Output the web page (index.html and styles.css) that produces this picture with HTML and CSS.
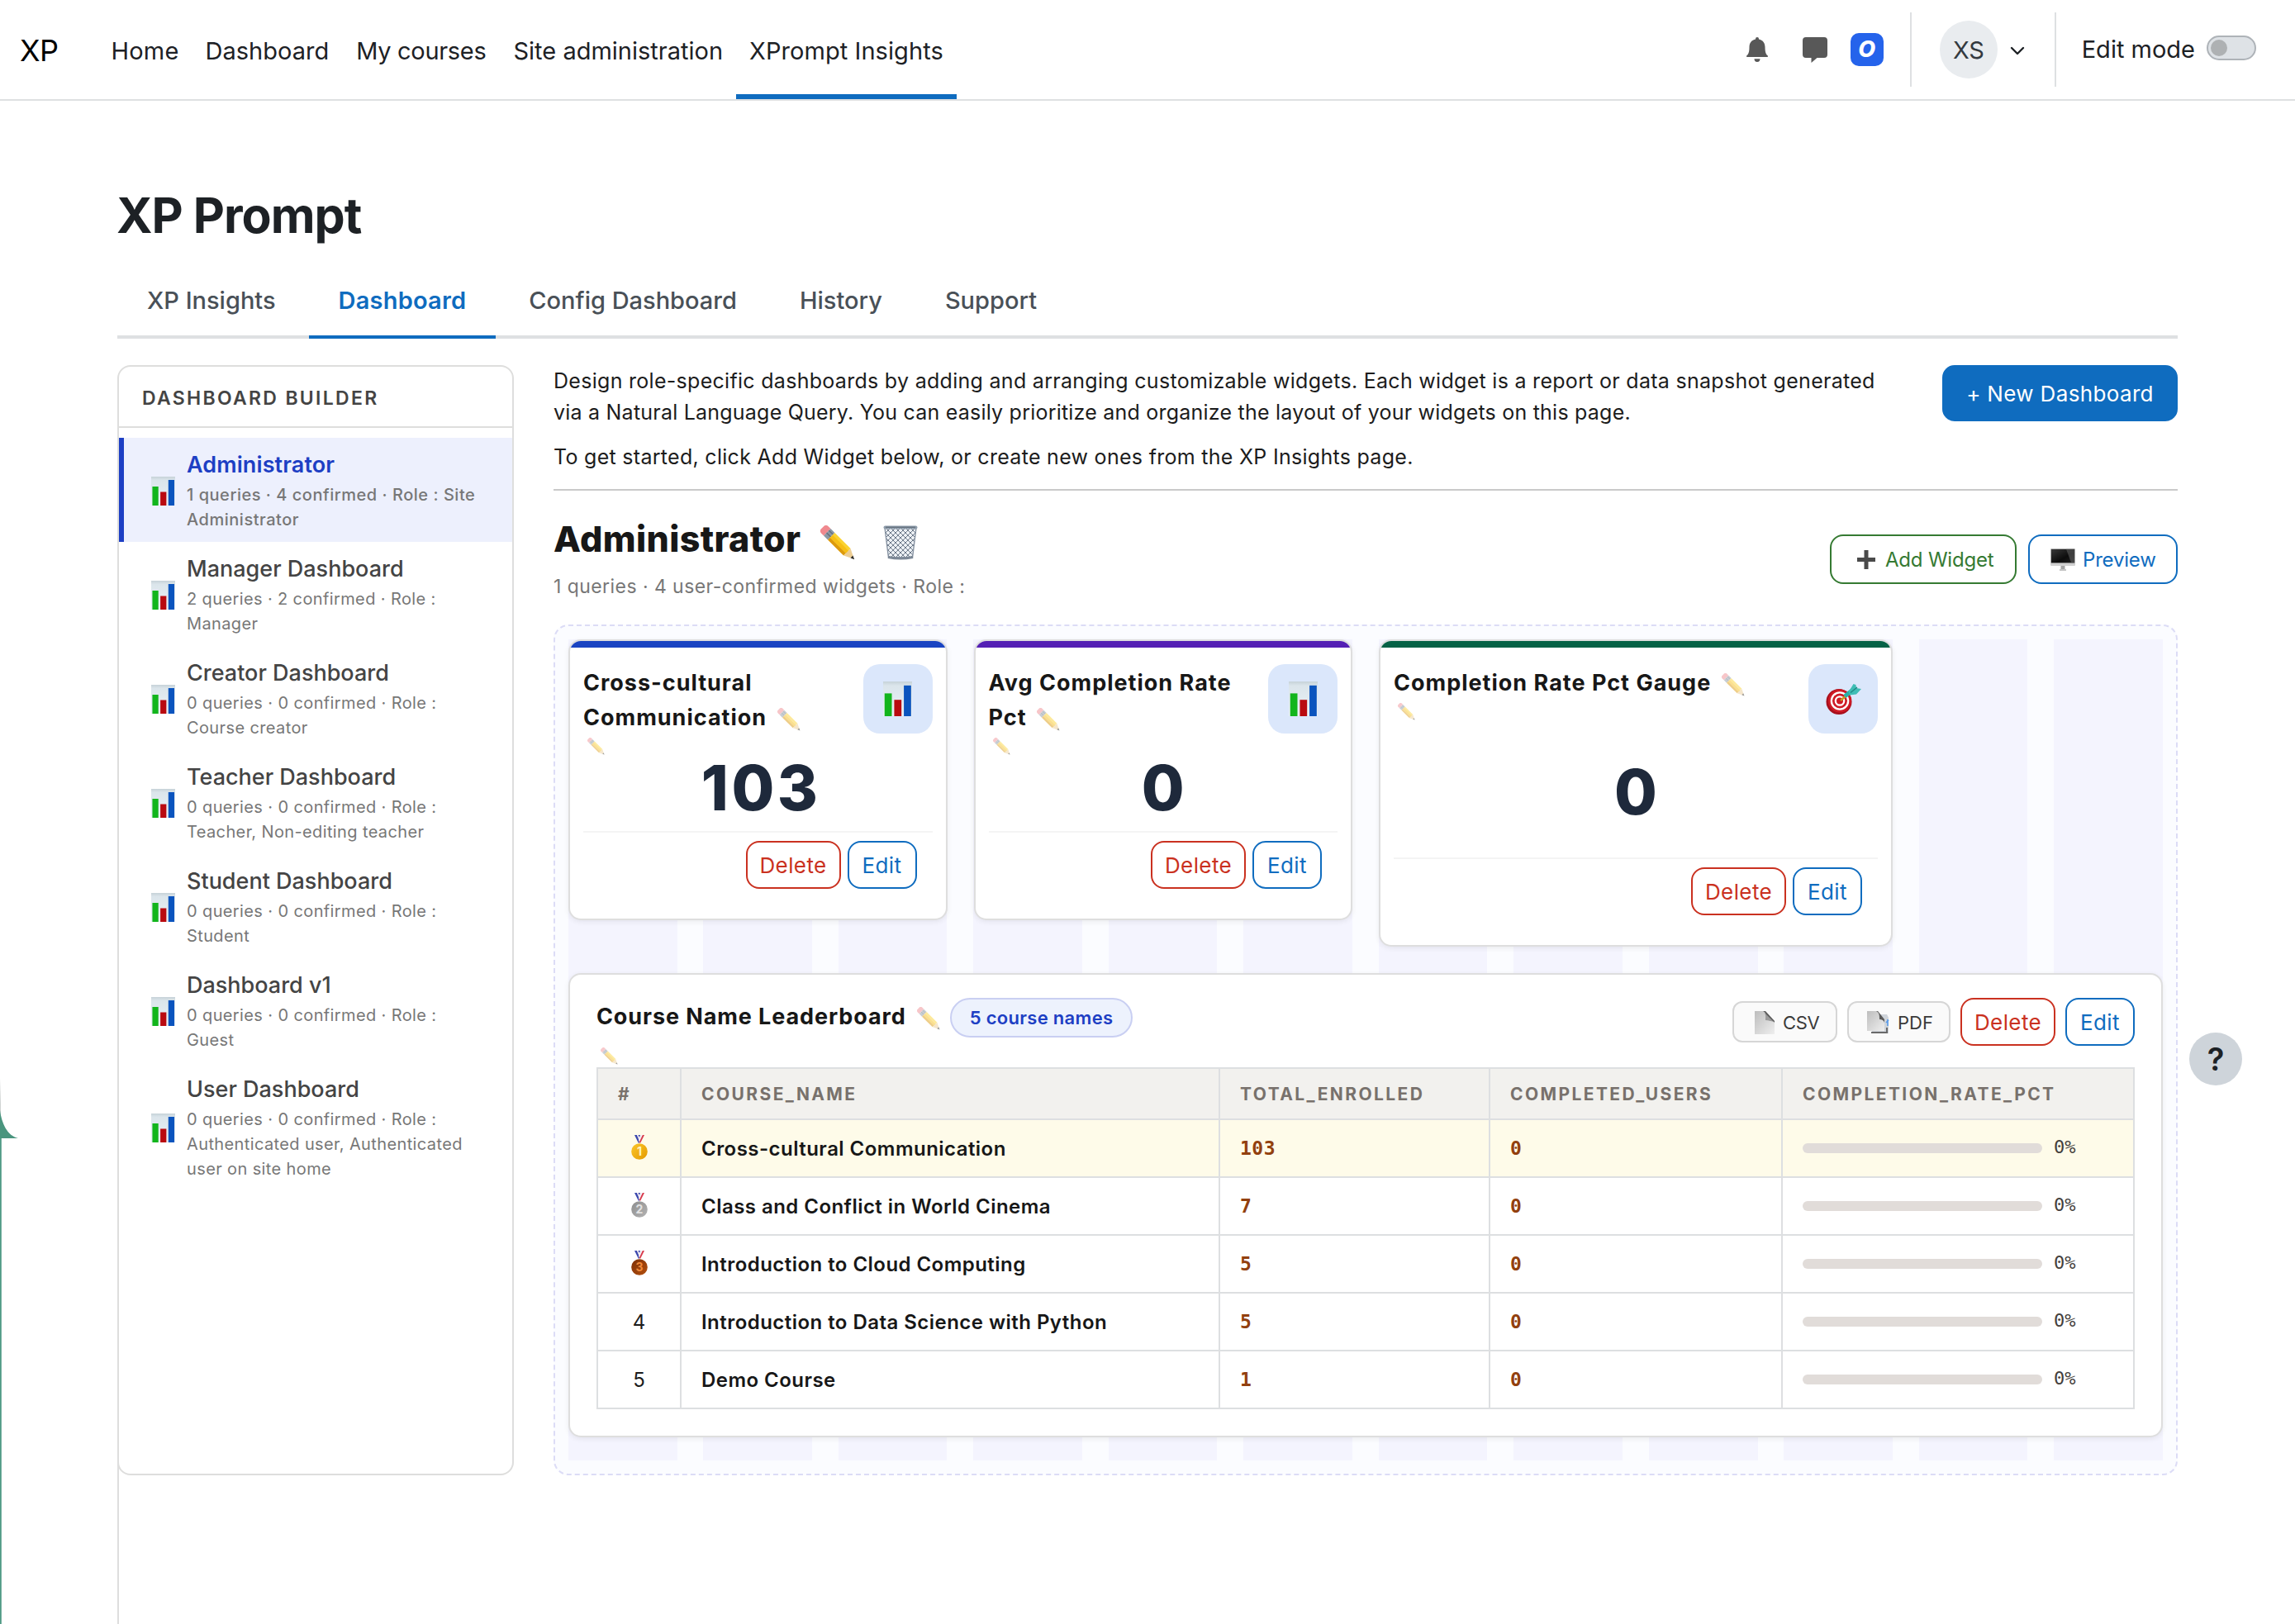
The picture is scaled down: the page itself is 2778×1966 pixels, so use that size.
FILE: index.html
```html
<!DOCTYPE html>
<html lang="en">
<head>
<meta charset="utf-8">
<title>XP Prompt</title>
<link rel="stylesheet" href="styles.css">
</head>
<body>
<svg class="defs" width="0" height="0" aria-hidden="true">
  <defs>
    <linearGradient id="paper" x1="0" y1="0" x2="0" y2="1"><stop offset="0" stop-color="#c6d2d8"/><stop offset=".12" stop-color="#dbe5eb"/><stop offset="1" stop-color="#eaf1f6"/></linearGradient>
    <linearGradient id="gold" x1="0" y1="0" x2="1" y2="1"><stop offset="0" stop-color="#fcc62a"/><stop offset="1" stop-color="#e39a00"/></linearGradient>
    <linearGradient id="silver" x1="0" y1="0" x2="1" y2="1"><stop offset="0" stop-color="#8d8d8d"/><stop offset="1" stop-color="#b4b4b4"/></linearGradient>
    <linearGradient id="bronze" x1="0" y1="0" x2="1" y2="1"><stop offset="0" stop-color="#7d2f06"/><stop offset="1" stop-color="#b4510f"/></linearGradient>
    <linearGradient id="screen" x1="0" y1="0" x2="1" y2="1"><stop offset="0" stop-color="#3a3a3a"/><stop offset=".6" stop-color="#0c0c0c"/><stop offset="1" stop-color="#222"/></linearGradient>
    <linearGradient id="sheet" x1="0" y1="0" x2="1" y2="1"><stop offset="0" stop-color="#bdbdbd"/><stop offset="1" stop-color="#efefef"/></linearGradient>
    <pattern id="mesh" width="6" height="6" patternUnits="userSpaceOnUse"><path d="M0 0L6 6M6 0L0 6" stroke="#6f7b8b" stroke-width="1" fill="none"/></pattern>
    <symbol id="chart" viewBox="0 0 30 35" preserveAspectRatio="none">
      <rect width="30" height="35" fill="url(#paper)"/>
      <rect x="1.5" y="12" width="7.5" height="23" fill="#12b51c"/>
      <rect x="11.5" y="18.5" width="7.5" height="16.5" fill="#b90a10"/>
      <rect x="21.5" y="4" width="7.5" height="31" fill="#0b54be"/>
    </symbol>
    <symbol id="pencil" viewBox="0 0 42 42">
      <g transform="translate(21 21) rotate(45)">
        <path d="M-18 -6h-4a4 4 0 0 0-4 4v4a4 4 0 0 0 4 4h4z" fill="#f0898f"/>
        <path d="M-18 -6h7v12h-7z" fill="#8b98a5"/>
        <path d="M-18 -3h7M-18 1h7" stroke="#65717e" stroke-width="1.4"/>
        <path d="M-11 -6h27v4h-27z" fill="#fbd331"/>
        <path d="M-11 -2.4h28v4.8h-28z" fill="#f7bf14"/>
        <path d="M-11 2.2h27v3.8h-27z" fill="#dd9a0b"/>
        <path d="M16 -6L28 0L16 6z" fill="#eccd94"/>
        <path d="M24 -2L28.500 0L24 2z" fill="#2b2b2b"/>
      </g>
    </symbol>
    <symbol id="trash" viewBox="0 0 42 42">
      <path d="M2 3h38l-4.500 36h-29z" fill="#edf1f5"/>
      <path d="M2 3h38l-4.500 36h-29z" fill="url(#mesh)" stroke="#8793a2" stroke-width="1.400"/>
      <path d="M6 38.500q15 3 30 0" stroke="#7c8896" stroke-width="3" fill="none"/>
      <rect x=".5" y=".5" width="41" height="4" rx="2" fill="#8f9dac"/>
      <path d="M3 2.200h36" stroke="#55606d" stroke-width="1"/>
    </symbol>
    <symbol id="target" viewBox="0 0 43 38">
      <ellipse cx="16" cy="22.500" rx="15.500" ry="15.500" fill="#a80f1c"/>
      <ellipse cx="17" cy="21.500" rx="14" ry="14" fill="#cf1a25"/>
      <ellipse cx="17" cy="21.500" rx="11.300" ry="11.300" fill="#fff"/>
      <ellipse cx="17" cy="21.500" rx="9" ry="9" fill="#cf1a25"/>
      <ellipse cx="17" cy="21.500" rx="6.300" ry="6.300" fill="#fff"/>
      <ellipse cx="17" cy="21.500" rx="4" ry="4" fill="#cf1a25"/>
      <path d="M18 21L26 14" stroke="#c79a1e" stroke-width="2.500"/>
      <path d="M23 16L36 5.500" stroke="#2bb0a9" stroke-width="5"/>
      <path d="M28 10L33.500 1l3 1 .5 4 6 1-6 6.500-8 1z" fill="#3fbdb5"/>
      <path d="M30 11.500L38 5" stroke="#1f8580" stroke-width="1.300"/>
    </symbol>
    <symbol id="plus" viewBox="0 0 22 23"><path d="M8.500 0h5v9H22v5h-8.500v9h-5v-9H0V9h8.500z" fill="#4a4a4a"/></symbol>
    <symbol id="monitor" viewBox="0 0 30 27">
      <rect width="30" height="21" rx="1" fill="#d0d0d0"/>
      <rect x=".8" y=".8" width="28.400" height="16.600" fill="url(#screen)"/>
      <path d="M19 .8h10.200v16.600h-4z" fill="#666" opacity=".55"/>
      <path d="M12.500 21h5v4.500h-5z" fill="#a5a5a5"/><path d="M11 25h8v2h-8z" fill="#c4c4c4"/>
    </symbol>
    <symbol id="page" viewBox="0 0 24 28">
      <path d="M0 0h11l13 13v15H0z" fill="url(#sheet)"/>
      <path d="M10 0c4 2 4 6 4 11 4 0 8 0 10 3v-2L13 0z" fill="#5a5a5a"/>
      <path d="M11 1c3 3 2 7 2 10 4 0 6 1 10 2z" fill="#9a9a9a"/>
    </symbol>
    <symbol id="pages" viewBox="0 0 27 28">
      <path d="M6 4h18l2 4v19H6z" fill="#cfd4da"/>
      <path d="M25 10v8M23 14l3-3" stroke="#5a9bea" stroke-width="1.600"/>
      <path d="M5 26h19v-6" stroke="#6a6a6a" stroke-width="2" fill="none"/>
      <path d="M0 0h12l9 11v13H0z" fill="url(#sheet)"/>
      <path d="M11 0c4 2 4 5 4 10 3 0 5 1 6 4v-4L13 0z" fill="#5a5a5a"/>
    </symbol>
    <symbol id="ribbon" viewBox="0 0 12 10">
      <path d="M0 0h3l4 8-2 2z" fill="#3b48ad"/><path d="M3 0h1.600L7.500 8 6.500 9z" fill="#f2e9f0"/>
      <path d="M4.500 0H7l-1 3z" fill="#3b48ad"/>
      <path d="M12 0H9.500L5.500 8l1.500 2z" fill="#d8394a"/><path d="M9.800 0H8L5 7l.8 1.500z" fill="#f2e9f0"/>
    </symbol>
  </defs>
</svg>

<header class="topbar">
  <a class="brand">XP</a>
  <nav class="nav">
    <a class="nav-item home">Home</a>
    <a class="nav-item">Dashboard</a>
    <a class="nav-item tight">My courses</a>
    <a class="nav-item">Site administration</a>
    <a class="nav-item current">XPrompt Insights</a>
  </nav>
  <div class="tools">
    <svg class="bell" width="26" height="30" viewBox="0 0 26 30" fill="#585858"><path d="M13 0a2 2 0 0 1 2 2v.6c4.700.9 7.500 4.600 7.500 9.400 0 6 1 8.600 3.300 10.500.6.600.2 1.500-.6 1.500H.8c-.8 0-1.200-.9-.6-1.500C2.500 20.600 3.500 18 3.500 12c0-4.800 2.800-8.500 7.500-9.400V2a2 2 0 0 1 2-2z"/><path d="M9.500 26.200h7a3.500 3.700 0 0 1-7 0z"/></svg>
    <svg class="chat" width="30" height="31" viewBox="0 0 30 31" fill="#585858"><path d="M4 0h22a4 4 0 0 1 4 4v17a4 4 0 0 1-4 4h-8.500l-7 6v-6H4a4 4 0 0 1-4-4V4a4 4 0 0 1 4-4z"/></svg>
    <span class="o-badge">O</span>
    <span class="rule"></span>
    <span class="avatar">XS</span>
    <svg class="chevron" width="18" height="11" viewBox="0 0 18 11"><path d="M2 2l7 7 7-7" fill="none" stroke="#1d2125" stroke-width="2.400" stroke-linecap="round" stroke-linejoin="round"/></svg>
    <span class="rule second"></span>
    <span class="edit-label">Edit mode</span>
    <span class="toggle"><span class="knob"></span></span>
  </div>
</header>

<main class="page">
  <h1>XP Prompt</h1>
  <div class="tabs">
    <a class="tab">XP Insights</a>
    <a class="tab active">Dashboard</a>
    <a class="tab">Config Dashboard</a>
    <a class="tab">History</a>
    <a class="tab">Support</a>
  </div>

  <div class="columns">
    <aside class="sidebar">
      <div class="sidebar-head">DASHBOARD BUILDER</div>
      <div class="list">
        <div class="item selected"><svg class="item-icon"><use href="#chart"/></svg><div><div class="item-title">Administrator</div><div class="item-sub">1 queries · 4 confirmed · Role : Site<br>Administrator</div></div></div>
        <div class="item"><svg class="item-icon"><use href="#chart"/></svg><div><div class="item-title">Manager Dashboard</div><div class="item-sub">2 queries · 2 confirmed · Role :<br>Manager</div></div></div>
        <div class="item"><svg class="item-icon"><use href="#chart"/></svg><div><div class="item-title">Creator Dashboard</div><div class="item-sub">0 queries · 0 confirmed · Role :<br>Course creator</div></div></div>
        <div class="item"><svg class="item-icon"><use href="#chart"/></svg><div><div class="item-title">Teacher Dashboard</div><div class="item-sub">0 queries · 0 confirmed · Role :<br>Teacher, Non-editing teacher</div></div></div>
        <div class="item"><svg class="item-icon"><use href="#chart"/></svg><div><div class="item-title">Student Dashboard</div><div class="item-sub">0 queries · 0 confirmed · Role :<br>Student</div></div></div>
        <div class="item"><svg class="item-icon"><use href="#chart"/></svg><div><div class="item-title">Dashboard v1</div><div class="item-sub">0 queries · 0 confirmed · Role :<br>Guest</div></div></div>
        <div class="item"><svg class="item-icon"><use href="#chart"/></svg><div><div class="item-title">User Dashboard</div><div class="item-sub">0 queries · 0 confirmed · Role :<br>Authenticated user, Authenticated<br>user on site home</div></div></div>
      </div>
    </aside>

    <section class="main">
      <div class="intro">
        <div class="intro-text">
          <p>Design role-specific dashboards by adding and arranging customizable widgets. Each widget is a report or data snapshot generated<br><span class="closer">via a Natural Language Query. You can easily prioritize and organize the layout of your widgets on this page.</span></p>
          <p>To get started, click Add Widget below, or create new ones from the XP Insights page.</p>
        </div>
        <button class="btn-new">+ New Dashboard</button>
      </div>

      <div class="board-head">
        <div>
          <div class="board-title"><h2>Administrator</h2><svg class="icon-edit"><use href="#pencil"/></svg><svg class="icon-trash"><use href="#trash"/></svg></div>
          <div class="board-sub">1 queries · 4 user-confirmed widgets · Role :</div>
        </div>
        <div class="board-actions">
          <button class="btn-add"><svg width="22" height="23"><use href="#plus"/></svg>Add Widget</button>
          <button class="btn-preview"><svg width="30" height="27"><use href="#monitor"/></svg>Preview</button>
        </div>
      </div>

      <div class="board">
        <article class="card blue">
          <div class="card-head">
            <div>
              <h3>Cross-cultural<br>Communication <svg class="p-md"><use href="#pencil"/></svg></h3>
              <svg class="p-sm"><use href="#pencil"/></svg>
            </div>
            <span class="tile"><svg width="35" height="42"><use href="#chart"/></svg></span>
          </div>
          <div class="value wide">103</div>
          <div class="card-foot"><button class="btn-del">Delete</button><button class="btn-edit">Edit</button></div>
        </article>
        <article class="card purple">
          <div class="card-head">
            <div>
              <h3>Avg Completion Rate<br>Pct <svg class="p-md"><use href="#pencil"/></svg></h3>
              <svg class="p-sm"><use href="#pencil"/></svg>
            </div>
            <span class="tile"><svg width="35" height="42"><use href="#chart"/></svg></span>
          </div>
          <div class="value">0</div>
          <div class="card-foot"><button class="btn-del">Delete</button><button class="btn-edit">Edit</button></div>
        </article>
        <article class="card green">
          <div class="card-head">
            <div>
              <h3>Completion Rate Pct Gauge <svg class="p-md"><use href="#pencil"/></svg></h3>
              <svg class="p-sm"><use href="#pencil"/></svg>
            </div>
            <span class="tile"><svg width="43" height="38"><use href="#target"/></svg></span>
          </div>
          <div class="value">0</div>
          <div class="card-foot"><button class="btn-del">Delete</button><button class="btn-edit">Edit</button></div>
        </article>

        <article class="leader">
          <div class="leader-head">
            <div class="leader-title"><h3>Course Name Leaderboard</h3><svg class="p-md"><use href="#pencil"/></svg><span class="count">5 course names</span></div>
            <div class="leader-actions">
              <button class="btn-file"><svg width="24" height="28"><use href="#page"/></svg>CSV</button>
              <button class="btn-file pdf"><svg width="27" height="28"><use href="#pages"/></svg>PDF</button>
              <button class="btn-del">Delete</button><button class="btn-edit">Edit</button>
            </div>
          </div>
          <div class="leader-note"><svg class="p-sm"><use href="#pencil"/></svg></div>
          <table>
            <colgroup><col class="c1"><col class="c2"><col class="c3"><col class="c4"><col class="c5"></colgroup>
            <thead><tr><th>#</th><th>COURSE_NAME</th><th>TOTAL_ENROLLED</th><th>COMPLETED_USERS</th><th>COMPLETION_RATE_PCT</th></tr></thead>
            <tbody>
              <tr class="first"><td class="rank"><svg width="20" height="30" viewBox="0 0 20 30"><use href="#ribbon" x="4" y="0" width="12" height="10"/><circle cx="10" cy="20" r="9.800" fill="url(#gold)"/><text x="10" y="25" class="medal-no">1</text></svg></td><td class="name">Cross-cultural Communication</td><td class="num">103</td><td class="num">0</td><td><div class="rate"><span class="bar"></span><span class="pct">0%</span></div></td></tr>
              <tr><td class="rank"><svg width="20" height="30" viewBox="0 0 20 30"><use href="#ribbon" x="4" y="0" width="12" height="10"/><circle cx="10" cy="20" r="9.800" fill="url(#silver)"/><text x="10" y="25" class="medal-no two">2</text></svg></td><td class="name">Class and Conflict in World Cinema</td><td class="num">7</td><td class="num">0</td><td><div class="rate"><span class="bar"></span><span class="pct">0%</span></div></td></tr>
              <tr><td class="rank"><svg width="20" height="30" viewBox="0 0 20 30"><use href="#ribbon" x="4" y="0" width="12" height="10"/><circle cx="10" cy="20" r="9.800" fill="url(#bronze)"/><text x="10" y="25" class="medal-no three">3</text></svg></td><td class="name">Introduction to Cloud Computing</td><td class="num">5</td><td class="num">0</td><td><div class="rate"><span class="bar"></span><span class="pct">0%</span></div></td></tr>
              <tr><td class="rank">4</td><td class="name">Introduction to Data Science with Python</td><td class="num">5</td><td class="num">0</td><td><div class="rate"><span class="bar"></span><span class="pct">0%</span></div></td></tr>
              <tr><td class="rank">5</td><td class="name">Demo Course</td><td class="num">1</td><td class="num">0</td><td><div class="rate"><span class="bar"></span><span class="pct">0%</span></div></td></tr>
            </tbody>
          </table>
        </article>
      </div>
    </section>
  </div>
</main>

<button class="help">?</button>
<svg class="corner" width="24" height="660" viewBox="0 0 24 660"><path d="M0 0L1 30L1 72H0z" fill="#cfd3d2"/><path d="M0 38C2 54 9 69 22 72H0z" fill="#4a957e"/><path d="M0 72h1.800v588H0z" fill="#4f9a84"/></svg>
</body>
</html>
```
FILE: styles.css
```css
* { box-sizing: border-box; }
body {
  margin: 0;
  width: 2778px;
  height: 1966px;
  overflow: hidden;
  position: relative;
  background: #fff;
  color: #1d2125;
  font-family: Inter, "Liberation Sans", sans-serif;
}
h1, h2, h3, p { margin: 0; }
svg { display: block; flex: none; }
.defs { position: absolute; }
button { font-family: inherit; padding: 0; margin: 0; background: #fff; flex: none; }

/* top bar */
.topbar { display: flex; height: 122px; border-bottom: 2px solid #dee0e2; padding: 0 47px 0 24px; }
.brand { width: 94px; display: flex; align-items: center; padding-top: 2px; font-size: 36px; letter-spacing: -.6px; color: #000; }
.nav { display: flex; height: 120px; }
.nav-item { display: flex; align-items: center; padding: 8px 16.5px 0; border-bottom: 6px solid transparent; font-size: 29px; white-space: nowrap; }
.nav-item.home { letter-spacing: .2px; padding-right: 15.5px; }
.nav-item.tight { letter-spacing: -.3px; }
.nav-item.current { border-bottom-color: #0f6cbf; letter-spacing: .07px; margin-left: -1px; }
.tools { display: flex; align-items: center; margin-left: auto; }
.bell { margin-right: 42px; }
.chat { margin-right: 28px; }
.o-badge { width: 40px; height: 40px; border-radius: 10px; background: #2563eb; color: #fff; font-size: 27px; font-weight: 800; font-style: italic; line-height: 40px; text-align: center; margin-right: 32px; }
.rule { width: 2px; height: 90px; background: #dee0e2; margin-right: 34px; }
.rule.second { margin-right: 31px; }
.avatar { width: 70px; height: 70px; border-radius: 50%; background: #e9ecef; color: #343a40; font-size: 29px; line-height: 72px; text-align: center; letter-spacing: -.4px; margin-right: 15px; }
.chevron { margin: 2px 36px 0 0; }
.edit-label { font-size: 29px; margin: -2px 14px 0 0; }
.toggle { width: 60px; height: 30px; border: 2px solid #aeb3b8; border-radius: 15px; background: #dee2e6; padding: 3px; margin-top: -4px; }
.knob { display: block; width: 20px; height: 20px; border-radius: 50%; background: #aeb1b3; }

/* page frame */
.page { padding: 103px 142px 0; }
h1 { font-size: 59px; line-height: 72px; font-weight: 700; letter-spacing: -1px; margin-left: -1px; }
.tabs { display: flex; gap: 4px; height: 90px; margin-top: 23px; border-bottom: 4px solid #dee0e2; }
.tab { display: flex; align-items: center; height: 90px; border-bottom: 4px solid transparent; padding: 0 36px; font-size: 29px; font-weight: 500; color: #495057; white-space: nowrap; }
.tab.active { font-weight: 600; letter-spacing: .2px; color: #0f6cbf; border-bottom-color: #0f6cbf; }
.columns { display: grid; grid-template-columns: 480px 1966px; gap: 48px; margin-top: 32px; position: relative; }
.columns::after { content: ""; position: absolute; left: 0; top: 1320px; width: 2px; height: 210px; background: #dedede; }

/* sidebar */
.sidebar { border: 2px solid #dededd; border-radius: 16px; background: #fff; }
.sidebar-head { height: 74px; padding: 4px 28px 0; display: flex; align-items: center; border-bottom: 2px solid #dededd; font-size: 23px; font-weight: 600; letter-spacing: 2.3px; color: #444; }
.list { padding-top: 12px; }
.item { display: flex; align-items: center; padding: 14px 20px 12px 33px; border-left: 6px solid transparent; }
.item-icon { width: 29px; height: 35px; margin: 0 14px 0 0; }
.item-title { font-size: 27px; line-height: 37px; font-weight: 500; color: #444; }
.item-sub { margin-top: 3px; font-size: 20px; line-height: 30px; letter-spacing: .38px; color: #777; white-space: nowrap; }
.item.selected { background: #edf0fd; border-left-color: #1d3fc4; }
.selected .item-title { font-weight: 600; letter-spacing: .1px; color: #1d3fc4; }
.selected .item-sub { font-weight: 500; letter-spacing: .52px; }

/* intro */
.intro { display: flex; justify-content: space-between; align-items: flex-start; height: 152px; border-bottom: 2px solid #c9c9c9; }
.intro-text { font-size: 25px; line-height: 38px; letter-spacing: .29px; color: #1c1c1c; white-space: nowrap; }
.intro-text .closer { letter-spacing: .22px; }
.intro-text p + p { margin-top: 16px; }
.btn-new { width: 285px; height: 68px; border: 0; border-radius: 15px; background: #0f6cbf; color: #fff; font-size: 26px; letter-spacing: .35px; }

/* board heading */
.board-head { display: flex; justify-content: space-between; align-items: center; padding: 32px 0 28px; }
.board-title { display: flex; align-items: center; height: 52px; }
h2 { font-size: 43px; line-height: 52px; font-weight: 800; letter-spacing: .35px; color: #171717; }
.icon-edit, .icon-trash { width: 42px; height: 42px; margin: 9px 0 0 24px; }
.icon-trash { margin-left: 34px; }
.board-sub { margin-top: 14px; font-size: 23px; line-height: 36px; letter-spacing: .44px; color: #777; }
.board-actions { display: flex; gap: 14px; }
.btn-add, .btn-preview { display: flex; align-items: center; height: 60px; border: 2px solid #357a32; border-radius: 16px; color: #357a32; font-size: 24px; letter-spacing: -.2px; }
.btn-add { width: 226px; padding-left: 31px; gap: 12px; }
.btn-preview { width: 181px; padding-left: 25px; gap: 9px; border-color: #0f6cbf; color: #0f6cbf; }

/* widget board */
.board {
  display: grid;
  grid-template-columns: repeat(12, 1fr);
  gap: 32px;
  align-items: start;
  height: 1030px;
  border: 2px dashed #dcdcf6;
  border-radius: 18px;
  padding: 16px;
  background:
    repeating-linear-gradient(to right, #f4f4fe 0 131.5px, #fbfcff 131.5px 163.5px) content-box,
    linear-gradient(#fbfcff, #fbfcff) border-box;
  grid-template-rows: 372px 562px;
}
.card, .leader { background: #fff; border: 2px solid #dedede; border-radius: 15px; overflow: hidden; box-shadow: 0 2px 6px rgba(0, 0, 0, .07); }
.card { display: flex; flex-direction: column; height: 340px; padding: 0 16px 36px; grid-column: span 3; }
.card::before { content: ""; flex: none; height: 8px; margin: 0 -16px; background: #1a44c2; }
.card.purple::before { background: #5420b4; }
.card.green { grid-column: span 4; height: 372px; }
.card.green::before { background: #056246; }
.card-head { display: flex; justify-content: space-between; align-items: flex-start; margin-top: 20px; }
h3 { font-size: 27px; line-height: 42px; font-weight: 700; letter-spacing: 1px; color: #171717; white-space: nowrap; }
.card h3 { padding-top: 2px; }
.p-md { width: 28px; height: 28px; opacity: .48; }
.card .p-md { display: inline-block; vertical-align: -7px; margin-left: 5px; }
.p-sm { width: 21px; height: 21px; margin: 3px 0 0 5px; opacity: .45; }
.tile { width: 84px; height: 84px; border-radius: 20px; background: #dbe7fb; display: flex; align-items: center; justify-content: center; }
.value { flex: 1; display: flex; align-items: center; justify-content: center; padding-bottom: 13px; min-height: 0; font-size: 75px; line-height: 1; font-weight: 800; color: #1e293b; }
.green .value { padding-bottom: 10px; }
.value.wide { letter-spacing: 3.5px; padding-left: 8px; }
.card-foot { display: flex; gap: 8px; justify-content: flex-end; padding: 10px 19px 0 0; border-top: 2px solid #f4f4f4; }
.btn-del, .btn-edit { width: 115px; height: 58px; border: 2px solid #ca3120; border-radius: 16px; color: #ca3120; font-size: 26px; letter-spacing: .4px; }
.btn-edit { width: 84px; border-color: #0f6cbf; color: #0f6cbf; }

/* leaderboard */
.leader { grid-column: 1 / -1; height: 562px; padding: 28px 32px 0; }
.leader-head { display: flex; justify-content: space-between; height: 58px; }
.leader-title { display: flex; align-items: flex-start; }
.leader-title h3 { line-height: 46px; letter-spacing: .9px; }
.leader-title .p-md { margin: 11px 12px 0 13px; }
.count { height: 48px; border: 2px solid #c9cff2; border-radius: 24px; background: #edf2fd; padding: 0 22px; line-height: 45px; font-size: 22px; font-weight: 600; letter-spacing: .3px; color: #1d3fc4; }
.leader-actions { display: flex; align-items: center; gap: 12px; }
.btn-file { display: flex; align-items: center; width: 127px; height: 50px; border: 2px solid #d6d6d6; border-radius: 12px; background: #fafafa; padding: 2px 0 0 25px; gap: 10px; font-size: 22px; letter-spacing: -.4px; color: #3a3a3a; }
.btn-file.pdf { width: 125px; padding-left: 22px; letter-spacing: 0; }
.leader-note { height: 26px; padding-top: 2px; }
.leader-note .p-sm { margin-top: 0; }
table { width: 1862px; table-layout: fixed; border-collapse: separate; border-spacing: 0; }
.c1 { width: 103px; } .c2 { width: 652px; } .c3 { width: 327px; } .c4 { width: 354px; } .c5 { width: 426px; }
th, td { border: 0 solid #dddfe1; border-right-width: 2px; border-bottom-width: 2px; padding: 0 0 0 24px; text-align: left; }
th { height: 64px; border-top-width: 2px; background: #f2f1ee; font-size: 21px; font-weight: 700; letter-spacing: 2.4px; color: #78716c; }
td { height: 70px; font-size: 24px; color: #1c1c1c; }
th:first-child, td:first-child { border-left-width: 2px; }
.first td { background: #fefbe9; }
td.rank { padding: 0; text-align: center; }
.rank svg { margin: -2px auto 0; }
.medal-no { font-size: 14px; font-weight: 700; text-anchor: middle; fill: #fff3c4; }
.medal-no.two { fill: #e2e2e2; }
.medal-no.three { fill: #f08a3c; }
.name { font-weight: 600; letter-spacing: .46px; color: #171717; }
td.num { font-family: "DejaVu Sans Mono", "Liberation Mono", monospace; font-size: 23px; font-weight: 700; letter-spacing: .5px; color: #92400e; }
.rate { display: flex; align-items: center; }
.bar { width: 290px; height: 12px; border-radius: 6px; background: #e1dcd9; margin-right: 14px; }
.pct { font-family: "DejaVu Sans Mono", "Liberation Mono", monospace; font-size: 22px; letter-spacing: 0; line-height: 28px; margin-top: -2px; color: #44403c; }

/* floating help and the strip at the window edge */
.help { position: absolute; left: 2650px; top: 1250px; width: 64px; height: 64px; border: 0; border-radius: 50%; background: #ced4da; color: #1d2125; font-size: 38px; font-weight: 600; line-height: 64px; text-align: center; }
.corner { position: absolute; left: 0; top: 1306px; }
```
